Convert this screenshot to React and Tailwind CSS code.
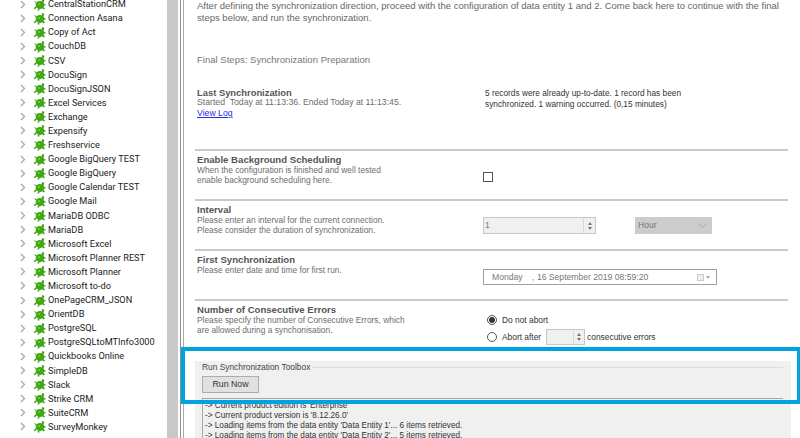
const connections = [
  "CentralStationCRM", "Connection Asana", "Copy of Act", "CouchDB", "CSV", "DocuSign", "DocuSignJSON",
  "Excel Services", "Exchange", "Expensify", "Freshservice", "Google BigQuery TEST", "Google BigQuery",
  "Google Calendar TEST", "Google Mail", "MariaDB ODBC", "MariaDB", "Microsoft Excel", "Microsoft Planner REST",
  "Microsoft Planner", "Microsoft to-do", "OnePageCRM_JSON", "OrientDB", "PostgreSQL", "PostgreSQLtoMTInfo3000",
  "Quickbooks Online", "SimpleDB", "Slack", "Strike CRM", "SuiteCRM", "SurveyMonkey", "Twitter",
];

function Turtle() {
  return (
    <svg width="13" height="13" viewBox="0 0 14 14" className="shrink-0">
      <g fill="#3fa814">
        <ellipse cx="7.5" cy="7.5" rx="4.6" ry="4.4" />
        <path d="M10 1.2l2.2.6-.6 3-2.4-1zM.8 3.6l3.2.8-.6 1.6zM.6 11l2.8-2.4.8 1.4-2 2zM5.6 11l1.6.2-.6 2.4-1.8-.4zM9.8 10.4l1.6-.8 1.6 1.8-1.8 1zM11 6.2l2.6.6-.2 1.4-2.6-.2z" />
      </g>
      <circle cx="6.5" cy="6.5" r="1" fill="#7ad63a" />
    </svg>
  );
}

function Chevron() {
  return (
    <svg width="6" height="9" viewBox="0 0 6 9" className="shrink-0">
      <path d="M1 1l3.5 3.5L1 8" fill="none" stroke="#a3a3a3" strokeWidth="1.2" />
    </svg>
  );
}

function Section({ title, lines, children, h }) {
  return (
    <div className={`flex border-t-2 border-[#c9c9c9] ${h}`}>
      <div className="w-[277px] shrink-0 pt-[3px] pl-[2px] text-[#6d6d6d] leading-[10px] text-[8.4px] whitespace-nowrap">
        <div className="font-bold text-[#555] text-[9.6px] leading-[11px]">{title}</div>
        {lines.map((l) => (
          <div key={l}>{l}</div>
        ))}
      </div>
      {children}
    </div>
  );
}

function Spinner({ w, h = "h-[16px]" }) {
  return (
    <div className={`flex flex-col justify-center items-center gap-[2px] ${w} ${h} border-l border-[#d8d8d8]`}>
      <span className="w-0 h-0 border-x-[2.5px] border-x-transparent border-b-[3px] border-b-[#777]" />
      <span className="w-0 h-0 border-x-[2.5px] border-x-transparent border-t-[3px] border-t-[#777]" />
    </div>
  );
}

export default function App() {
  return (
    <div className="relative flex w-[800px] h-[438px] overflow-hidden bg-white font-['Liberation_Sans',sans-serif]">
      <div className="w-[167px] h-full overflow-hidden pl-[20px] -mt-[3px] font-['Roboto',sans-serif] text-[9.2px] text-[#222]">
        {connections.map((name) => (
          <div key={name} className="flex items-center h-[14.1px]">
            <Chevron />
            <span className="ml-[7px]">
              <Turtle />
            </span>
            <span className="ml-[2px] whitespace-nowrap">{name}</span>
          </div>
        ))}
      </div>
      <div className="w-[11px] h-full bg-[#c9c9c9]" />
      <div className="w-[2px] h-full bg-white" />
      <div className="w-[1px] h-full bg-[#8c8c8c]" />
      <div className="w-[2px] h-full bg-white" />
      <div className="w-[1px] h-full bg-[#a8a8a8]" />
      <div className="flex-1 min-w-0 pl-[11px] pr-[12px]">
        <div className="text-[9.5px] leading-[12px] text-[#666] whitespace-nowrap pl-[2px]">
          <div>After defining the synchronization direction, proceed with the configuration of data entity 1 and 2. Come back here to continue with the final</div>
          <div>steps below, and run the synchronization.</div>
        </div>
        <div className="mt-[30px] pl-[2px] text-[9.55px] leading-[12px] text-[#777]">Final Steps: Synchronization Preparation</div>
        <div className="flex mt-[21px] h-[62px]">
          <div className="w-[277px] shrink-0 pl-[2px] pt-[1px] text-[8.7px] leading-[10px] text-[#6d6d6d] whitespace-nowrap">
            <div className="font-bold text-[9.4px] text-[#555] -mb-[1px]">Last Synchronization</div>
            <div>Started&nbsp; Today at 11:13:36. Ended Today at 11:13:45.</div>
            <div className="text-[#2a2ae0] underline mt-[1px]">View Log</div>
          </div>
          <div className="ml-[13px] w-[220px] text-[8.3px] leading-[10.5px] text-[#333] pt-[1px]">
            5 records were already up-to-date. 1 record has been synchronized. 1 warning occurred. (0,15 minutes)
          </div>
        </div>

        <Section title="Enable Background Scheduling" lines={["When the configuration is finished and well tested", "enable background scheduling here."]} h="h-[50px]">
          <div className="pt-[21px] pl-[11px]">
            <div className="w-[10px] h-[10px] border border-[#555]" />
          </div>
        </Section>

        <Section title="Interval" lines={["Please enter an interval for the current connection.", "Please consider the duration of synchronization."]} h="h-[50px]">
          <div className="flex pt-[16px] pl-[11px] items-start text-[8.6px] text-[#777]">
            <div className="flex items-center justify-between w-[113px] h-[17px] bg-[#f0f0f0] border border-[#c6c6c6] pl-[1px]">
              <span>1</span>
              <Spinner w="w-[12px]" h="h-[15px]" />
            </div>
            <div className="flex items-center justify-between ml-[39px] w-[77px] h-[17px] bg-[#cccccc] pl-[3px] pr-[5px]">
              <span>Hour</span>
              <svg width="9" height="5" viewBox="0 0 9 5"><path d="M.5.5l4 4 4-4" fill="none" stroke="#a8a8a8" /></svg>
            </div>
          </div>
        </Section>

        <Section title="First Synchronization" lines={["Please enter date and time for first run."]} h="h-[50px]">
          <div className="pt-[18px] pl-[11px]">
            <div className="flex items-center w-[234px] h-[16px] border border-[#a0a0a0] pl-[8px] text-[8.6px] text-[#777]">
              <span className="whitespace-pre">Monday    , 16 September 2019 08:59:20</span>
              <span className="ml-auto w-[7px] h-[7px] bg-[#eee] border border-[#ccc]" />
              <span className="ml-[2px] mr-[6px] w-0 h-0 border-x-[2.5px] border-x-transparent border-t-[3px] border-t-[#aaa]" />
            </div>
          </div>
        </Section>

        <Section title="Number of Consecutive Errors" lines={["Please specify the number of Consecutive Errors, which", "are allowed during a synchonisation."]} h="h-[47px]">
          <div className="pt-[12px] pl-[15px] text-[8.4px] text-[#333] leading-[10px]">
            <div className="flex items-center gap-[5px] h-[14px]">
              <span className="flex items-center justify-center w-[10px] h-[10px] rounded-full border border-[#555]">
                <span className="w-[6px] h-[6px] rounded-full bg-[#333]" />
              </span>
              <span>Do not abort</span>
            </div>
            <div className="flex items-center gap-[5px] h-[17px] mt-[1px]">
              <span className="w-[10px] h-[10px] rounded-full border border-[#555]" />
              <span>Abort after</span>
              <div className="flex justify-end w-[39px] h-[16px] bg-[#f0f0f0] border border-[#c6c6c6]">
                <Spinner w="w-[11px]" h="h-[14px]" />
              </div>
              <span className="-ml-[3px] whitespace-nowrap">consecutive errors</span>
            </div>
          </div>
        </Section>

        <div className="mt-[15px] -mr-[3px] h-[100px] bg-[#f0f0f0] pl-[7px] pr-[8px]">
          <div className="flex items-center gap-[2px]">
            <div className="text-[8.4px] leading-[12px] text-[#444] whitespace-nowrap">Run Synchronization Toolbox</div>
            <div className="flex-1 h-px bg-[#dcdcdc]" />
          </div>
          <button className="block mt-[3px] w-[57px] h-[17px] bg-[#e1e1e1] border border-[#adadad] text-[8.8px] leading-[15px] text-[#333]">Run Now</button>
          <div className="mt-[5px] h-[60px] bg-[#f0f0f0] border-t border-l border-[#a8a8a8] pl-[2px] pt-[2px] text-[8.2px] leading-[10px] text-[#333] whitespace-nowrap">
            <div>-&gt; Current product edition is 'Enterprise'</div>
            <div>-&gt; Current product version is '8.12.26.0'</div>
            <div>-&gt; Loading items from the data entity 'Data Entity 1'... 6 items retrieved.</div>
            <div>-&gt; Loading items from the data entity 'Data Entity 2'... 5 items retrieved.</div>
          </div>
        </div>
      </div>
      {/* highlight box drawn over the screenshot */}
      <div className="absolute left-[181px] top-[347px] w-[619px] h-[57px] border-[4px] border-r-[3px] border-[#00a2e0]" />
    </div>
  );
}
